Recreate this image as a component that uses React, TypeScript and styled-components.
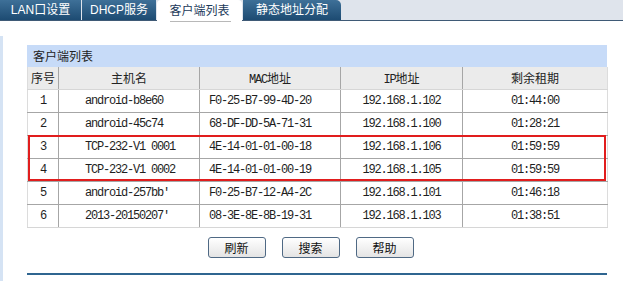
import React from 'react';
import styled, { createGlobalStyle } from 'styled-components';

const Global = createGlobalStyle`
  html, body { margin: 0; padding: 0; background: #fff; }
  body {
    font-family: "Liberation Sans", "Noto Sans CJK SC", sans-serif;
    font-size: 12px;
    color: #222;
  }
`;

const Page = styled.div`
  width: 623px;
  height: 281px;
  overflow: hidden;
  display: flex;
  flex-direction: column;
`;

const TabBar = styled.div`
  display: flex;
  align-items: flex-start;
  gap: 1px;
  height: 21px;
  box-sizing: border-box;
  background: #dfe4ec;
  border-bottom: 1px solid #3f5a76;
`;

const Tab = styled.div<{ $active?: boolean; $w: number; $last?: boolean }>`
  position: relative;
  width: ${p => p.$w}px;
  height: ${p => (p.$active ? 21 : 20)}px;
  display: flex;
  align-items: center;
  justify-content: center;
  background: ${p => (p.$active ? '#fff' : 'linear-gradient(#3e7098, #1d4b72)')};
  color: ${p => (p.$active ? '#1b3a5a' : '#fff')};
  border-radius: ${p => (p.$active ? '4px 4px 0 0' : p.$last ? '0 5px 0 0' : '0')};
  font-size: 12px;
  line-height: 14px;
  z-index: 1;
  ${p =>
    p.$active &&
    `
    &::after {
      content: '';
      position: absolute;
      left: 13px;
      right: 11px;
      bottom: -1px;
      height: 1px;
      background: #b8b8b8;
    }
  `}
`;

const Body = styled.div`
  flex: 1;
  margin-top: 15px;
  border-left: 3px solid #d5e3f4;
  padding: 9px 0 0 24px;
`;

const Panel = styled.div`
  width: 580px;
  display: flex;
  flex-direction: column;
`;

const PanelHeader = styled.div`
  height: 22px;
  line-height: 22px;
  padding-left: 6px;
  background: #c7dbf8;
  font-family: "Noto Sans CJK SC", sans-serif;
  font-size: 12px;
  color: #222;
`;

const TableWrap = styled.div`
  position: relative;
`;

const Table = styled.table`
  width: 580px;
  border-collapse: collapse;
  table-layout: fixed;
`;

const Th = styled.th<{ $last?: boolean; $first?: boolean }>`
  height: 22px;
  padding: 0;
  box-sizing: border-box;
  background: #ebebeb;
  font-weight: normal;
  font-family: "Noto Sans CJK SC", sans-serif;
  font-size: 12px;
  color: #222;
  text-align: center;
  border-right: 1px solid ${p => (p.$last ? '#dcdcdc' : '#a6a6a6')};
  border-left: 1px solid ${p => (p.$first ? '#dcdcdc' : '#a6a6a6')};
  border-bottom: 1px solid #d6d6d6;
`;

const Latin = styled.span`
  font-family: "Liberation Mono", monospace;
  font-size: 12px;
  letter-spacing: -1.2px;
`;

const Td = styled.td<{ $align?: 'left' | 'center'; $pl?: number; $last?: boolean; $first?: boolean; $bottom?: boolean }>`
  height: 23px;
  padding: 0 0 0 ${p => p.$pl ?? 0}px;
  box-sizing: border-box;
  background: #fff;
  font-family: "Liberation Mono", monospace;
  font-size: 12px;
  letter-spacing: -1.2px;
  color: #1e1e1e;
  white-space: nowrap;
  overflow: hidden;
  text-align: ${p => p.$align ?? 'center'};
  border-right: 1px solid ${p => (p.$last ? '#dcdcdc' : '#a6a6a6')};
  border-left: 1px solid ${p => (p.$first ? '#dcdcdc' : '#a6a6a6')};
  border-bottom: 1px solid ${p => (p.$bottom ? '#d6d6d6' : '#a6a6a6')};
`;

const Highlight = styled.div<{ $top: number; $height: number }>`
  position: absolute;
  left: 1px;
  width: 578px;
  top: ${p => p.$top}px;
  height: ${p => p.$height}px;
  box-sizing: border-box;
  border: 2px solid #e11d1d;
  pointer-events: none;
`;

const ButtonRow = styled.div`
  display: flex;
  justify-content: center;
  gap: 16px;
  margin-top: 9px;
  padding-right: 13px;
`;

const Button = styled.button`
  width: 58px;
  height: 21px;
  padding: 0;
  box-sizing: border-box;
  border: 1px solid #4f6984;
  border-radius: 3px;
  background: linear-gradient(#ffffff, #e4e4e4);
  font-family: "Noto Sans CJK SC", sans-serif;
  font-size: 12px;
  line-height: 19px;
  color: #111;
`;

const BottomRule = styled.div`
  margin-top: 15px;
  height: 2px;
  background: #2f6590;
`;

const rows = [
  ['1', 'android-b8e60', 'F0-25-B7-99-4D-20', '192.168.1.102', '01:44:00'],
  ['2', 'android-45c74', '68-DF-DD-5A-71-31', '192.168.1.100', '01:28:21'],
  ['3', 'TCP-232-V1 0001', '4E-14-01-01-00-18', '192.168.1.106', '01:59:59'],
  ['4', 'TCP-232-V1 0002', '4E-14-01-01-00-19', '192.168.1.105', '01:59:59'],
  ['5', "android-257bb'", 'F0-25-B7-12-A4-2C', '192.168.1.101', '01:46:18'],
  ['6', "2013-20150207'", '08-3E-8E-8B-19-31', '192.168.1.103', '01:38:51'],
];

const widths = [31, 141, 141, 122, 145];

export default function App() {
  return (
    <Page>
      <Global />
      <TabBar>
        <Tab $w={81}>LAN口设置</Tab>
        <Tab $w={74}>DHCP服务</Tab>
        <Tab $w={85} $active>客户端列表</Tab>
        <Tab $w={98} $last>静态地址分配</Tab>
      </TabBar>
      <Body>
        <Panel>
          <PanelHeader>客户端列表</PanelHeader>
          <TableWrap>
            <Table>
              <colgroup>
                {widths.map((w, i) => (
                  <col key={i} style={{ width: w }} />
                ))}
              </colgroup>
              <thead>
                <tr>
                  <Th $first>序号</Th>
                  <Th>主机名</Th>
                  <Th><Latin>MAC</Latin>地址</Th>
                  <Th><Latin>IP</Latin>地址</Th>
                  <Th $last>剩余租期</Th>
                </tr>
              </thead>
              <tbody>
                {rows.map((r, i) => {
                  const bottom = i === rows.length - 1;
                  return (
                    <tr key={r[0]}>
                      <Td $first $bottom={bottom}>{r[0]}</Td>
                      <Td $align="left" $pl={26} $bottom={bottom}>{r[1]}</Td>
                      <Td $align="left" $pl={9} $bottom={bottom}>{r[2]}</Td>
                      <Td $bottom={bottom}>{r[3]}</Td>
                      <Td $last $bottom={bottom}>{r[4]}</Td>
                    </tr>
                  );
                })}
              </tbody>
            </Table>
            <Highlight $top={68} $height={46} />
          </TableWrap>
          <ButtonRow>
            <Button>刷新</Button>
            <Button>搜索</Button>
            <Button>帮助</Button>
          </ButtonRow>
          <BottomRule />
        </Panel>
      </Body>
    </Page>
  );
}
